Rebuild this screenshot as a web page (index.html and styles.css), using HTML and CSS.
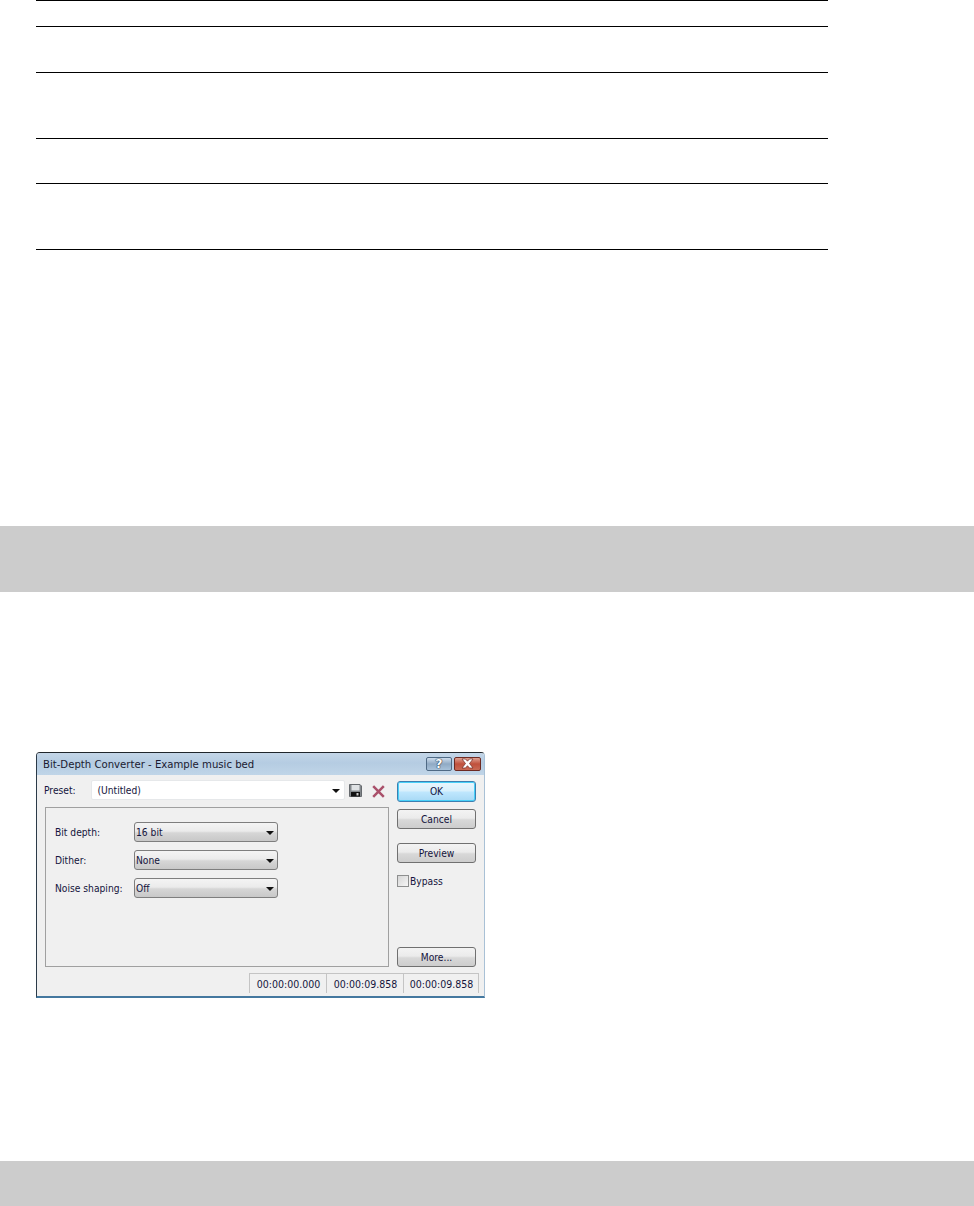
FILE: index.html
```html
<!DOCTYPE html>
<html lang="en">
<head>
<meta charset="utf-8">
<title>Bit-Depth Converter</title>
<link rel="stylesheet" href="styles.css">
</head>
<body>
<div class="rules">
  <div class="rule-row r26"></div>
  <div class="rule-row r46"></div>
  <div class="rule-row r66"></div>
  <div class="rule-row r45"></div>
  <div class="rule-row r66"></div>
</div>
<div class="band band-first"></div>
<div class="dialog">
  <div class="titlebar">
    <span class="title">Bit-Depth Converter - Example music bed</span>
    <div class="caption-buttons">
      <span class="cap cap-help">?</span>
      <span class="cap cap-close">
        <svg width="17" height="11" viewBox="0 0 17 11"><path d="M3 1h3.500l2 2.200 2-2.200H14l-3.500 4.500L14 10h-3.500l-2-2.300-2 2.300H3l3.500-4.500z" fill="#fff" stroke="#6e2a22" stroke-width=".7"/></svg>
      </span>
    </div>
  </div>
  <div class="content">
    <div class="main-col">
      <div class="preset-row">
        <span class="preset-label">Preset:</span>
        <div class="preset-combo">
          <span>(Untitled)</span>
          <span class="arrow"></span>
        </div>
        <svg class="icon-save" width="13" height="13" viewBox="0 0 13 13"><path d="M.5.500h10.500l1.500 1.500v10.500H.5z" fill="#83888c" stroke="#666a6e"/><rect x="2.500" y="1" width="8" height="5.500" fill="#dfe2e4"/><rect x="2" y="8" width="9" height="4.500" fill="#111"/><rect x="7.500" y="9" width="2" height="2.500" fill="#ccc"/></svg>
        <svg class="icon-delete" width="13" height="13" viewBox="0 0 13 13"><path d="M1.200 1.200l10.600 10.600M11.800 1.200L1.200 11.800" stroke="#a9506a" stroke-width="2.500"/></svg>
      </div>
      <div class="panel">
        <div class="field"><span class="field-label">Bit depth:</span><div class="select"><span>16 bit</span><span class="arrow"></span></div></div>
        <div class="field"><span class="field-label">Dither:</span><div class="select"><span>None</span><span class="arrow"></span></div></div>
        <div class="field"><span class="field-label">Noise shaping:</span><div class="select"><span>Off</span><span class="arrow"></span></div></div>
      </div>
    </div>
    <div class="side-col">
      <div class="btn btn-default">OK</div>
      <div class="btn btn-cancel">Cancel</div>
      <div class="btn btn-preview">Preview</div>
      <label class="bypass"><span class="check"></span>Bypass</label>
      <div class="btn btn-more">More...</div>
    </div>
  </div>
  <div class="statusbar">
    <span class="cell">00:00:00.000</span>
    <span class="cell">00:00:09.858</span>
    <span class="cell">00:00:09.858</span>
  </div>
</div>
<div class="band band-last"></div>
</body>
</html>
```

FILE: styles.css
```css
* { box-sizing: border-box; }
html, body { margin: 0; padding: 0; background: #fff; }
body { height: 1206px; overflow: hidden; font-family: "DejaVu Sans Condensed", "DejaVu Sans", sans-serif; font-size: 10.200px; color: #14143c; }

.rules { margin-left: 36px; width: 792px; border-bottom: 1px solid #000; }
.rule-row { border-top: 1px solid #000; }
.r26 { height: 26px; }
.r46 { height: 46px; }
.r66 { height: 66px; }
.r45 { height: 45px; }

.band { background: #cccccc; }
.band-first { height: 66px; margin-top: 276px; }
.band-last { height: 45px; margin-top: 163px; }

.dialog { width: 449px; height: 246px; margin: 160px 0 0 36px; border: 1px solid #2b3a48; border-bottom: 2px solid #44789f; border-top-color: #20262c; border-radius: 4px 4px 0 0; background: #f0f0f0; display: flex; flex-direction: column; overflow: hidden; border-right-color: #a9c1d6; }

.titlebar { height: 22px; flex: none; display: flex; align-items: center; justify-content: space-between; padding: 0 3px 0 6px; background: linear-gradient(#c4d6e8, #b5cce2 45%, #c0d5e8); }
.title { font-size: 11.250px; color: #1a1a30; }
.caption-buttons { display: flex; gap: 2px; margin-bottom: 1px; }
.cap { height: 14px; display: flex; align-items: center; justify-content: center; border: 1px solid #4f6a85; border-radius: 2px; overflow: hidden; }
.cap-help { width: 26px; background: linear-gradient(#cddcec, #90aac4 50%, #a8c2da); color: #fff; font-family: "DejaVu Sans", sans-serif; font-weight: bold; font-size: 12.500px; line-height: 12px; text-shadow: 0 0 1px #25364a, 0 0 1px #25364a, 0 0 1px #25364a; }
.cap-close { width: 27px; border-color: #6d2a22; background: linear-gradient(#dfa193, #c0503c 50%, #c96a55); }

.content { flex: 1; display: flex; padding: 5px 8px 0; min-height: 0; }
.main-col { width: 343px; display: flex; flex-direction: column; }

.preset-row { height: 20px; display: flex; align-items: center; }
.preset-label { width: 45.500px; margin-left: -1px; margin-right: 1px; }
.preset-combo { width: 254px; height: 20px; display: flex; align-items: center; justify-content: space-between; padding: 0 4px 0 6px; background: #fff; border: 1px solid #e6e8ea; border-radius: 2px; }
.icon-save { margin-left: 4.500px; }
.icon-delete { margin-left: 10px; margin-top: 3px; }

.arrow { width: 0; height: 0; border-style: solid; border-width: 4px 4px 0; border-color: #111 transparent transparent; margin-bottom: -1px; }

.panel { margin-top: 7px; height: 160px; width: 344px; border: 1px solid #a0a0a0; padding: 14px 0 0 9px; display: flex; flex-direction: column; gap: 8px; }
.field { display: flex; align-items: center; height: 20px; }
.field-label { width: 79px; }
.select { width: 144px; height: 20px; display: flex; align-items: center; justify-content: space-between; padding: 0 3px 0 1px; border: 1px solid #7e7e7e; border-radius: 3px; background: linear-gradient(#f4f4f4, #ebebeb 45%, #d6d6d6 55%, #c8c8c8); }

.side-col { width: 79px; margin-left: 9px; display: flex; flex-direction: column; }
.btn { width: 79px; height: 20px; display: flex; align-items: center; justify-content: center; padding-top: 1px; border: 1px solid #707070; border-radius: 3px; background: linear-gradient(#f3f3f3, #ebebeb 45%, #d8d8d8 55%, #cdcdcd); }
.btn-default { height: 21px; margin-top: 1px; padding-top: 0; border-color: #3c7fb1; box-shadow: inset 0 0 0 1px #48d0f8; background: linear-gradient(#eaf6fd, #d9f0fc 45%, #bee6fd 55%, #a7d9f5); }
.btn-cancel { margin-top: 7px; }
.btn-preview { margin-top: 14px; padding-top: 0; }
.bypass { display: flex; align-items: center; gap: 1px; margin-top: 12px; height: 12px; }
.check { width: 12px; height: 12px; border: 1px solid #8e8f8f; background: linear-gradient(135deg, #d6d6d6, #f6f6f6); }
.btn-more { margin-top: 60px; padding-top: 0; }

.statusbar { height: 20px; flex: none; display: flex; justify-content: flex-end; padding-right: 5px; margin-bottom: 3px; font-size: 10.500px; }
.cell { width: 77px; display: flex; align-items: center; justify-content: center; padding-left: 1px; border: 1px solid #c4c4c4; border-right: 0; border-bottom: 0; }
.cell:last-child { width: 76px; border-right: 1px solid #c4c4c4; }
```
